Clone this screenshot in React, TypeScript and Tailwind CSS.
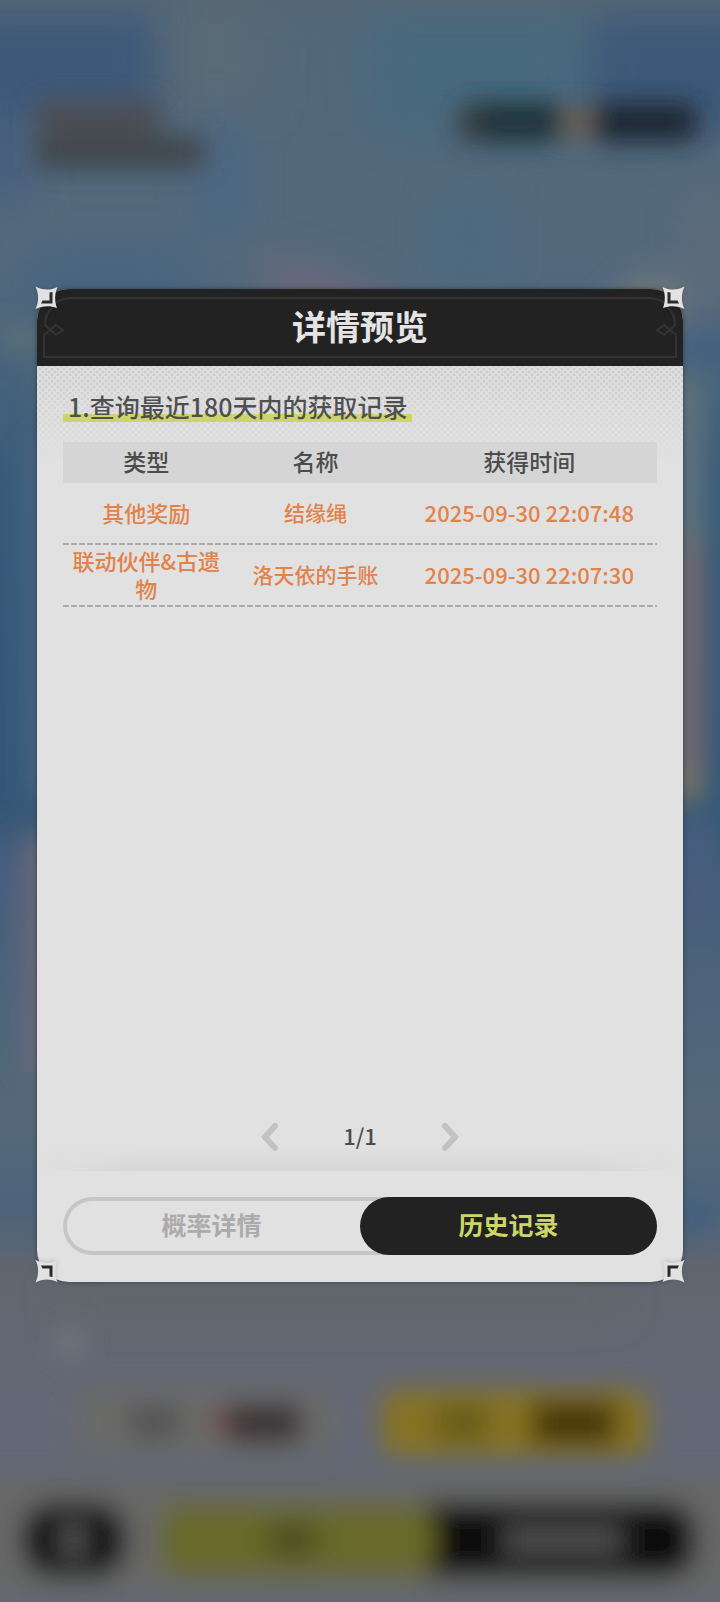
import { useState } from 'react'

interface RecordRow {
  type: string
  name: string
  time: string
}

interface CornerProps {
  className: string
}

interface ArrowButtonProps {
  label: string
  path: string
  onClick: () => void
}

const records: RecordRow[] = [
  { type: '其他奖励', name: '结缘绳', time: '2025-09-30 22:07:48' },
  { type: '联动伙伴&古遗物', name: '洛天依的手账', time: '2025-09-30 22:07:30' },
]

const tabs = ['概率详情', '历史记录']

// Blurred game scene behind the dialog
const Backdrop: React.FC = () => (
  <svg
    className="absolute inset-0 w-full h-full"
    viewBox="0 0 720 1602"
    preserveAspectRatio="none"
    aria-hidden="true"
  >
    <defs>
      <linearGradient id="sky" x1="0" y1="0" x2="0" y2="1">
        <stop offset="0" stopColor="#52687a" />
        <stop offset="0.16" stopColor="#53697c" />
        <stop offset="0.21" stopColor="#4c657c" />
        <stop offset="0.3" stopColor="#385b7a" />
        <stop offset="0.5" stopColor="#345777" />
        <stop offset="0.56" stopColor="#475f7a" />
        <stop offset="0.7" stopColor="#55697a" />
        <stop offset="0.755" stopColor="#4c637a" />
        <stop offset="0.79" stopColor="#606670" />
        <stop offset="0.88" stopColor="#656876" />
        <stop offset="0.93" stopColor="#5e6874" />
        <stop offset="1" stopColor="#656666" />
      </linearGradient>
      <filter id="far" x="-50%" y="-50%" width="200%" height="200%">
        <feGaussianBlur stdDeviation="20" />
      </filter>
      <filter id="side" x="-50%" y="-50%" width="200%" height="200%">
        <feGaussianBlur stdDeviation="13" />
      </filter>
      <filter id="near" x="-50%" y="-50%" width="200%" height="200%">
        <feGaussianBlur stdDeviation="13" />
      </filter>
    </defs>
    <rect width="720" height="1602" fill="url(#sky)" />
    <g filter="url(#far)">
      <rect x="-60" y="14" width="218" height="104" fill="#3e5879" />
      <rect x="-60" y="118" width="90" height="80" fill="#465e80" />
      <rect x="165" y="-40" width="100" height="150" fill="#596a76" />
      <rect x="370" y="15" width="210" height="115" fill="#47697e" />
      <rect x="590" y="14" width="190" height="115" fill="#3e5979" />
      <rect x="-40" y="-34" width="800" height="34" fill="#566570" />
      <rect x="200" y="120" width="40" height="110" fill="#486883" />
      <rect x="30" y="250" width="160" height="90" fill="#49657f" />
      <rect x="440" y="200" width="60" height="80" fill="#4b6a80" />
      <path d="M255 255l80 20 130 60-10 30-170-40z" fill="#70697a" />
      <path d="M645 280l-75 90-20 40 60 0 70-120z" fill="#8d8578" />
      <path d="M530 330l-30 60 50 10z" fill="#6a7a7b" />
      <rect x="50" y="375" width="130" height="30" fill="#68746f" />
      <rect x="690" y="190" width="30" height="130" fill="#626c7a" />
      <rect x="60" y="1290" width="560" height="20" fill="#5f6762" />
      <rect x="-30" y="1570" width="780" height="50" fill="#5f6a74" />
    </g>
    {/* strips that show on both sides of the dialog */}
    <g filter="url(#side)">
      <rect x="0" y="325" width="50" height="26" fill="#5a6f77" />
      <rect x="680" y="338" width="60" height="20" fill="#435f84" />
      <rect x="670" y="375" width="34" height="170" fill="#61727a" />
      <rect x="670" y="540" width="34" height="250" fill="#746c6d" />
      <rect x="670" y="775" width="34" height="26" fill="#78745f" />
      <rect x="30" y="440" width="30" height="360" fill="#506684" />
      <rect x="24" y="835" width="36" height="240" fill="#6a6979" />
      <rect x="-20" y="850" width="30" height="50" fill="#4a5f85" />
      <rect x="680" y="820" width="30" height="100" fill="#4a5d80" />
      <rect x="680" y="1205" width="24" height="28" fill="#3f5d80" />
    </g>
    <g filter="url(#near)">
      {/* title block and currency pills */}
      <path d="M36 100h124v35h45v30H36z" fill="#4b4e54" />
      <rect x="36" y="142" width="168" height="26" fill="#3c454c" />
      <rect x="458" y="103" width="106" height="38" rx="14" fill="#1f3137" />
      <rect x="590" y="103" width="108" height="38" rx="14" fill="#1a2733" />
      <circle cx="578" cy="122" r="15" fill="#746351" />
      <circle cx="470" cy="122" r="10" fill="#4a4444" />
      <circle cx="70" cy="1342" r="14" fill="#727980" />
      {/* draw buttons */}
      <rect x="75" y="1390" width="260" height="64" rx="14" fill="#6a6a69" />
      <rect x="128" y="1406" width="52" height="32" fill="#535353" />
      <circle cx="222" cy="1422" r="13" fill="#754c4d" />
      <rect x="228" y="1404" width="74" height="38" fill="#3b3335" />
      <rect x="382" y="1390" width="266" height="66" rx="14" fill="#867222" />
      <rect x="436" y="1406" width="52" height="34" fill="#645c1d" />
      <rect x="532" y="1402" width="84" height="42" fill="#46340d" />
      {/* bottom bar */}
      <rect x="-40" y="1478" width="800" height="114" fill="#676867" />
      <rect x="22" y="1503" width="104" height="74" rx="32" fill="#090909" />
      <rect x="60" y="1520" width="26" height="40" fill="#505050" />
      <rect x="400" y="1503" width="296" height="74" rx="30" fill="#080808" />
      <rect x="160" y="1504" width="274" height="72" rx="18" fill="#68692c" />
      <rect x="268" y="1524" width="50" height="32" fill="#4c5020" />
      <rect x="504" y="1524" width="118" height="32" fill="#4c4c4c" />
    </g>
  </svg>
)

const Corner: React.FC<CornerProps> = ({ className }) => (
  <svg
    className={`absolute z-10 size-6 drop-shadow-sm ${className}`}
    viewBox="0 0 24 24"
    aria-hidden="true"
  >
    <path
      d="M0.500 0.500C7 4.500 16 4.500 22.500 1C19.500 8 19.500 15 22 22C15 19.500 8 19.500 0.500 23C4 16 4 8 0.500 0.500Z"
      fill="#e2e2e2"
    />
    <path d="M14.500 6.500L17.500 6V17.500H6L7.500 14.500H14.500Z" fill="#2a2a2a" />
  </svg>
)

const HeaderCap: React.FC<CornerProps> = ({ className }) => (
  <svg
    className={`w-9 h-[77px] shrink-0 ${className}`}
    viewBox="0 0 36 77"
    fill="none"
    stroke="#333333"
    strokeWidth="2"
    aria-hidden="true"
  >
    <path d="M36 9C26 9 18 12 15 19C10 23 8 29 8 36L19 46L26 41L19 36L7 46V68H36" />
  </svg>
)

const ArrowButton: React.FC<ArrowButtonProps> = ({ label, path, onClick }) => (
  <button
    type="button"
    aria-label={label}
    onClick={onClick}
    className="flex items-center justify-center size-10"
  >
    <svg
      className="w-5 h-8"
      viewBox="0 0 20 32"
      fill="none"
      stroke="#c2c2c2"
      strokeWidth="6"
      strokeLinecap="round"
      aria-hidden="true"
    >
      <path d={path} />
    </svg>
  </button>
)

const RecordTable: React.FC = () => (
  <table className="relative w-full table-fixed text-center">
    <colgroup>
      <col className="w-[28%]" />
      <col className="w-[29%]" />
      <col className="w-[43%]" />
    </colgroup>
    <thead>
      <tr className="h-[41px] bg-[#d5d5d5] text-[23px] leading-7 text-[#4c4c4c]">
        <th className="px-0 pt-0 pb-1 font-medium">类型</th>
        <th className="px-0 pt-0 pb-1 font-medium">名称</th>
        <th className="px-0 pt-0 pb-1 font-medium">获得时间</th>
      </tr>
    </thead>
    <tbody>
      {records.map((record) => (
        <tr
          key={record.time}
          className="h-[62px] text-[22px] leading-7 font-medium text-[#e38249] bg-[repeating-linear-gradient(90deg,#adadad_0_6px,transparent_6px_8px)] bg-[length:100%_2px] bg-bottom bg-no-repeat"
        >
          <td className="px-1 pt-0 pb-1">{record.type}</td>
          <td className="px-0 pt-0 pb-1 text-[21px]">{record.name}</td>
          <td className="px-0 pt-0 pb-1">{record.time}</td>
        </tr>
      ))}
    </tbody>
  </table>
)

const App: React.FC = () => {
  const [activeTab, setActiveTab] = useState('历史记录')
  const [page, setPage] = useState(1)
  const pageCount = 1

  return (
    <div className="relative flex flex-col min-h-screen overflow-hidden px-[37px] pt-[289px] pb-80 font-['Noto_Sans_CJK_SC',sans-serif]">
      <Backdrop />
      <main className="relative flex flex-col flex-1 rounded-4xl bg-[#e1e1e1] shadow-[0_0_5px_rgba(40,50,55,0.7)]">
        <Corner className="-top-[3px] -left-[2px]" />
        <Corner className="-top-[3px] -right-[2px] -scale-x-100" />
        <Corner className="-bottom-[1px] -left-[2px] -scale-y-100" />
        <Corner className="-bottom-[1px] -right-[2px] -scale-100" />

        <header className="relative flex h-[77px] rounded-t-4xl bg-[#222222]">
          <HeaderCap className="" />
          <div className="flex flex-1 items-center justify-center my-2 pb-1 border-y-2 border-[#333333]">
            <h1 className="text-[34px] leading-10 font-bold text-[#e4e4e4]">
              详情预览
            </h1>
          </div>
          <HeaderCap className="-scale-x-100" />
        </header>

        <section className="relative flex flex-col flex-1 px-[26px] pt-6">
          <div className="absolute inset-x-0 top-0 h-24 bg-[radial-gradient(circle,#cdcdcd_1px,transparent_2px),radial-gradient(circle,#cdcdcd_1px,transparent_2px)] bg-[length:6px_6px] bg-[position:0_0,3px_3px] mask-b-from-10% mask-b-to-100%" />
          <p className="relative self-start mb-5 px-[5px] text-[25px] leading-8 font-medium text-[#505050] bg-[linear-gradient(#cdd568,#cdd568)] bg-[length:100%_8px] bg-bottom bg-no-repeat">
            1.查询最近180天内的获取记录
          </p>
          <RecordTable />
          <nav className="relative flex items-center justify-center gap-[50px] mt-auto pb-3.5">
            <ArrowButton
              label="上一页"
              path="M15 5L5 16L15 27"
              onClick={() => setPage(Math.max(1, page - 1))}
            />
            <span className="w-10 pb-1 text-center text-[22px] leading-7 font-medium text-[#4c4c4c]">
              {page}/{pageCount}
            </span>
            <ArrowButton
              label="下一页"
              path="M5 5L15 16L5 27"
              onClick={() => setPage(Math.min(pageCount, page + 1))}
            />
          </nav>
          <div className="absolute inset-x-0 bottom-0 h-6 bg-linear-to-t from-[#d6d6d6] to-transparent mask-x-from-85% mask-x-to-100%" />
        </section>

        <footer className="px-[26px] pt-[26px] pb-[27px]">
          <div className="flex h-[58px] rounded-full shadow-[inset_0_0_0_4px_#c6c6c6]">
            {tabs.map((tab) => (
              <button
                key={tab}
                type="button"
                aria-pressed={tab === activeTab}
                onClick={() => setActiveTab(tab)}
                className={`flex-1 pb-1 rounded-full text-[25px] leading-8 font-bold ${
                  tab === activeTab
                    ? 'bg-[#222222] text-[#cdd568]'
                    : 'text-[#ababab]'
                }`}
              >
                {tab}
              </button>
            ))}
          </div>
        </footer>
      </main>
    </div>
  )
}

export default App
